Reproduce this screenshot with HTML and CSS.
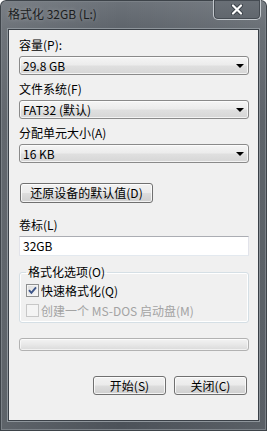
FILE: index.html
```html
<!DOCTYPE html>
<html lang="zh-CN">
<head>
<meta charset="utf-8">
<title>格式化 32GB (L:)</title>
<link rel="stylesheet" href="styles.css">
</head>
<body>
<div class="window">
  <div class="titlebar">
    <span class="title">格式化 32GB (L:)</span>
    <button class="close" type="button" aria-label="关闭">
      <svg width="14" height="11" viewBox="0 0 14 11">
        <path d="M3 1.5 L11 9.5 M11 1.5 L3 9.5" stroke="#3a4048" stroke-width="4" stroke-linecap="round"/>
        <path d="M3 1.5 L11 9.5 M11 1.5 L3 9.5" stroke="#ffffff" stroke-width="2.2" stroke-linecap="round"/>
      </svg>
    </button>
  </div>
  <div class="client">
    <div class="field">
      <div class="field-label">容量(P):</div>
      <div class="combo"><span>29.8 GB</span><i class="arrow"></i></div>
    </div>
    <div class="field">
      <div class="field-label">文件系统(F)</div>
      <div class="combo"><span>FAT32 (默认)</span><i class="arrow"></i></div>
    </div>
    <div class="field">
      <div class="field-label">分配单元大小(A)</div>
      <div class="combo"><span>16 KB</span><i class="arrow"></i></div>
    </div>
    <button class="btn btn-restore" type="button">还原设备的默认值(D)</button>
    <div class="field field-volume">
      <div class="field-label">卷标(L)</div>
      <div class="textbox">32GB</div>
    </div>
    <fieldset class="group">
      <legend>格式化选项(O)</legend>
      <div class="check-row">
        <span class="checkbox checked">
          <svg width="11" height="11" viewBox="0 0 11 11"><path d="M2 5.2 L4.4 7.8 L9 2.4" fill="none" stroke="#3c5488" stroke-width="1.9"/></svg>
        </span>
        <span>快速格式化(Q)</span>
      </div>
      <div class="check-row disabled">
        <span class="checkbox"></span>
        <span>创建一个 MS-DOS 启动盘(M)</span>
      </div>
    </fieldset>
    <div class="progress"></div>
    <div class="actions">
      <button class="btn btn-action" type="button">开始(S)</button>
      <button class="btn btn-action" type="button">关闭(C)</button>
    </div>
  </div>
</div>
</body>
</html>
```

FILE: styles.css
```css
* { box-sizing: border-box; }
html, body {
  margin: 0;
  padding: 0;
  width: 267px;
  height: 431px;
  overflow: hidden;
  font-family: "Noto Sans CJK SC", "Noto Sans", sans-serif;
  font-size: 12px;
  color: #000;
}
.window {
  width: 267px;
  height: 431px;
  display: flex;
  flex-direction: column;
  padding: 0 8px 10px 8px;
  background:
    linear-gradient(90deg, rgba(255,255,255,0.10), rgba(255,255,255,0) 45%, rgba(255,255,255,0.08)),
    linear-gradient(180deg, #6d737a 0, #5f656c 28px, #51575e 120px, #4c5259 100%);
  box-shadow: inset 0 0 0 1px #3d4349, inset 0 0 0 2px #7b8187;
  border-radius: 6px 6px 0 0;
}
.titlebar {
  height: 29px;
  flex: none;
  display: flex;
  justify-content: space-between;
  align-items: flex-start;
  margin-right: -2px;
}
.title {
  padding-top: 7px;
  line-height: 13px;
  font-size: 12px;
  color: #1b1d20;
  text-shadow: 0 0 4px rgba(255,255,255,0.35);
}
.close {
  width: 48px;
  height: 20px;
  margin: 0;
  padding: 0;
  display: flex;
  align-items: center;
  justify-content: center;
  border: 1px solid #c3c8cd;
  border-top: none;
  border-radius: 0 0 5px 5px;
  background: linear-gradient(180deg, #6a7077, #60666d);
  box-shadow: inset 0 0 0 1px #454b52;
}
.client {
  flex: 1;
  background: #f0f0f0;
  border: 1px solid #3a4047;
  box-shadow: 0 0 0 1px #8e959b;
  padding: 9px 9px 0 10px;
  display: flex;
  flex-direction: column;
  align-items: stretch;
}
.field + .field { margin-top: 8px; }
.field-label {
  line-height: 12px;
  height: 12px;
  margin-bottom: 5px;
  white-space: nowrap;
}
.combo {
  height: 19px;
  border: 1px solid #8a8a8a;
  border-radius: 3px;
  background: linear-gradient(180deg, #f5f5f5 0, #ececec 45%, #dfdfdf 55%, #d6d6d6 100%);
  box-shadow: inset 0 0 0 1px rgba(255,255,255,0.7);
  display: flex;
  align-items: center;
  justify-content: space-between;
  padding: 0 4px 0 3px;
  line-height: 12px;
}
.arrow {
  width: 0;
  height: 0;
  border-left: 4px solid transparent;
  border-right: 4px solid transparent;
  border-top: 4px solid #000;
  margin-top: 1px;
}
.btn {
  font: inherit;
  color: #000;
  margin: 0;
  padding: 0;
  border: 1px solid #707070;
  border-radius: 3px;
  background: linear-gradient(180deg, #f2f2f2 0, #ebebeb 48%, #dddddd 52%, #cfcfcf 100%);
  box-shadow: inset 0 0 0 1px rgba(255,255,255,0.75);
  line-height: 12px;
}
.btn-restore {
  align-self: flex-start;
  margin-top: 20px;
  margin-left: 1px;
  width: 133px;
  height: 20px;
}
.field-volume { margin-top: 16px; }
.field-volume .field-label { margin-bottom: 5px; }
.textbox {
  height: 20px;
  background: #fff;
  border: 1px solid #e2e3ea;
  border-top-color: #abadb3;
  border-bottom-color: #e3e9ef;
  padding: 0 3px;
  line-height: 18px;
}
.group {
  margin: 10px 0 0 0;
  padding: 6px 6px 5px 6px;
  border: 1px solid #d5dfe5;
  border-radius: 3px;
  box-shadow: inset 0 0 0 1px #ffffff;
  min-width: 0;
}
.group legend {
  padding: 0 2px;
  line-height: 12px;
  height: 12px;
}
.check-row {
  display: flex;
  align-items: center;
  gap: 2px;
  height: 13px;
  line-height: 12px;
  white-space: nowrap;
}
.check-row + .check-row { margin-top: 7px; }
.checkbox {
  width: 13px;
  height: 13px;
  flex: none;
  border: 1px solid #8e8f8f;
  background: linear-gradient(135deg, #dcdcdc, #f9f9f9);
  box-shadow: inset 0 0 0 1px #f4f4f4;
  display: flex;
  align-items: center;
  justify-content: center;
}
.check-row.disabled { color: #a3a3a3; }
.check-row.disabled .checkbox {
  border-color: #c7c7c7;
  background: #f4f4f4;
  box-shadow: none;
}
.progress {
  margin-top: 15px;
  height: 13px;
  border: 1px solid #b2b2b2;
  border-radius: 3px;
  background: linear-gradient(180deg, #f3f3f3 0, #e8e8e8 50%, #dadada 100%);
  box-shadow: inset 0 0 0 1px rgba(255,255,255,0.6);
}
.actions {
  margin-top: 25px;
  display: flex;
  justify-content: flex-end;
  gap: 8px;
  padding-right: 2px;
}
.btn-action {
  width: 73px;
  height: 19px;
}
```
